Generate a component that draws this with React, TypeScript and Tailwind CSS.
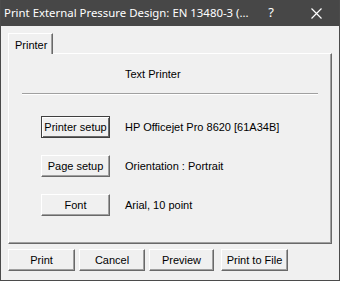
import React from "react";

const btn3d =
  "flex items-center justify-center bg-[#f0f0f0] border border-t-white border-l-white border-r-[#696969] border-b-[#696969] shadow-[inset_-1px_-1px_0_#a0a0a0]";

function Btn({ label, className = "" }: { label: string; className?: string }) {
  return <div className={`${btn3d} ${className}`}>{label}</div>;
}

export default function App() {
  return (
    <div
      className="w-[340px] h-[281px] bg-[#f0f0f0] border border-t-0 border-[#4b4b4b] flex flex-col text-[11px] text-black overflow-hidden"
      style={{ fontFamily: '"Liberation Sans", Arial, sans-serif' }}
    >
      {/* Title bar */}
      <div className="h-[26px] bg-[#474747] flex items-center text-white shrink-0 -mx-px px-[4px]">
        <span
          className="text-[11.4px] whitespace-nowrap"
          style={{ fontFamily: '"Noto Sans", "Open Sans", sans-serif' }}
        >
          Print External Pressure Design: EN 13480-3 (...
        </span>
        <span
          className="ml-auto text-[13px] mr-[37px]"
          style={{ fontFamily: '"Noto Sans", sans-serif' }}
        >
          ?
        </span>
        <svg width="11" height="11" viewBox="0 0 11 11" className="mr-[14px]">
          <path d="M0.5 0.5 L10.5 10.5 M10.5 0.5 L0.5 10.5" stroke="white" strokeWidth="1.2" />
        </svg>
      </div>

      {/* Body */}
      <div className="flex flex-col px-[7px] pt-[7px]">
        {/* Tab */}
        <div className="flex">
          <div className="relative z-10 h-[21px] w-[45px] bg-[#f0f0f0] border border-b-0 border-t-white border-l-white border-r-[#696969] shadow-[inset_-1px_0_0_#a0a0a0] pl-[6px] pt-[3px] -mb-px">
            Printer
          </div>
        </div>
        {/* Panel */}
        <div className="h-[191px] border border-t-white border-l-white border-r-[#696969] border-b-[#696969] shadow-[inset_-1px_-1px_0_#a0a0a0] flex flex-col">
          <div className="pl-[116px] pt-[14px] leading-[13px]">Text Printer</div>
          <div className="mx-[13px] mt-[12px] h-[2px] border-t border-[#a0a0a0] border-b border-b-white" />
          <div className="flex flex-col pl-[32px] pt-[21px] gap-[17px]">
            <div className="flex items-center">
              <div className="w-[69px] h-[22px] flex items-center justify-center bg-[#f0f0f0] border border-[#3f3f3f] shadow-[inset_1px_1px_0_#fff,inset_-1px_-1px_0_#696969]">
                Printer setup
              </div>
              <span className="ml-[15px]">HP Officejet Pro 8620 [61A34B]</span>
            </div>
            <div className="flex items-center">
              <Btn label="Page setup" className="w-[69px] h-[22px]" />
              <span className="ml-[15px]">Orientation : Portrait</span>
            </div>
            <div className="flex items-center">
              <Btn label="Font" className="w-[69px] h-[22px]" />
              <span className="ml-[15px]">Arial, 10 point</span>
            </div>
          </div>
        </div>
        {/* Bottom buttons */}
        <div className="flex mt-[5px]">
          <Btn label="Print" className="w-[67px] h-[22px]" />
          <Btn label="Cancel" className="w-[66px] h-[22px] ml-[4px]" />
          <Btn label="Preview" className="w-[65px] h-[22px] ml-[4px]" />
          <Btn label="Print to File" className="w-[67px] h-[22px] ml-[7px]" />
        </div>
      </div>
    </div>
  );
}
